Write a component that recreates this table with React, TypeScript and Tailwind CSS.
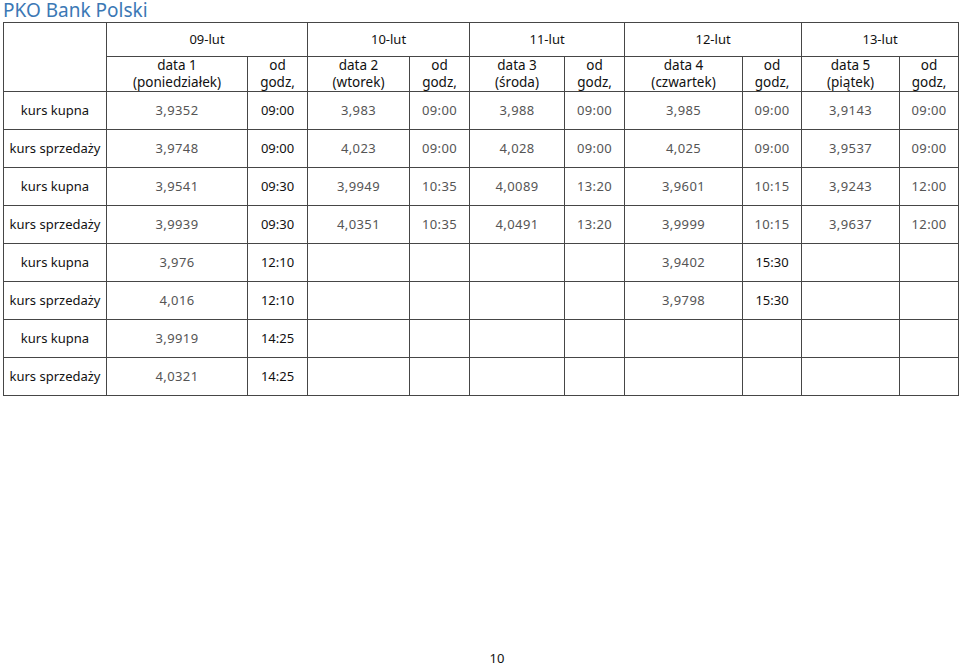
import React from 'react';

const font = { fontFamily: '"Noto Sans", "DejaVu Sans", sans-serif' };

type Cell = { v: string; t: string; dark?: boolean } | null;

interface Row {
  label: string;
  cells: Cell[];
}

const rows: Row[] = [
  {
    label: 'kurs kupna',
    cells: [
      { v: '3,9352', t: '09:00', dark: true },
      { v: '3,983', t: '09:00' },
      { v: '3,988', t: '09:00' },
      { v: '3,985', t: '09:00' },
      { v: '3,9143', t: '09:00' },
    ],
  },
  {
    label: 'kurs sprzedaży',
    cells: [
      { v: '3,9748', t: '09:00', dark: true },
      { v: '4,023', t: '09:00' },
      { v: '4,028', t: '09:00' },
      { v: '4,025', t: '09:00' },
      { v: '3,9537', t: '09:00' },
    ],
  },
  {
    label: 'kurs kupna',
    cells: [
      { v: '3,9541', t: '09:30', dark: true },
      { v: '3,9949', t: '10:35' },
      { v: '4,0089', t: '13:20' },
      { v: '3,9601', t: '10:15' },
      { v: '3,9243', t: '12:00' },
    ],
  },
  {
    label: 'kurs sprzedaży',
    cells: [
      { v: '3,9939', t: '09:30', dark: true },
      { v: '4,0351', t: '10:35' },
      { v: '4,0491', t: '13:20' },
      { v: '3,9999', t: '10:15' },
      { v: '3,9637', t: '12:00' },
    ],
  },
  {
    label: 'kurs kupna',
    cells: [{ v: '3,976', t: '12:10', dark: true }, null, null, { v: '3,9402', t: '15:30', dark: true }, null],
  },
  {
    label: 'kurs sprzedaży',
    cells: [{ v: '4,016', t: '12:10', dark: true }, null, null, { v: '3,9798', t: '15:30', dark: true }, null],
  },
  {
    label: 'kurs kupna',
    cells: [{ v: '3,9919', t: '14:25', dark: true }, null, null, null, null],
  },
  {
    label: 'kurs sprzedaży',
    cells: [{ v: '4,0321', t: '14:25', dark: true }, null, null, null, null],
  },
];

const days = [
  { date: '09-lut', name: 'data 1', day: '(poniedziałek)' },
  { date: '10-lut', name: 'data 2', day: '(wtorek)' },
  { date: '11-lut', name: 'data 3', day: '(środa)' },
  { date: '12-lut', name: 'data 4', day: '(czwartek)' },
  { date: '13-lut', name: 'data 5', day: '(piątek)' },
];

// column widths read off the scan
const widths = [103, 141, 60, 102, 60, 95, 60, 118, 59, 98, 59];

const td = 'border border-[#464646] p-0 text-center align-middle';

export default function App() {
  return (
    <div className="w-[960px] h-[667px] bg-white flex flex-col text-[13px] text-[#111]" style={font}>
      <h1 className="h-[22px] pl-[3px] text-[19px] leading-[21px] text-[#3b78b5]">PKO Bank Polski</h1>

      <table className="ml-[3px] table-fixed border-collapse w-[955px]">
        <colgroup>
          {widths.map((w, i) => (
            <col key={i} style={{ width: w }} />
          ))}
        </colgroup>
        <thead>
          <tr className="h-[34px]">
            <td rowSpan={2} className={td} />
            {days.map((d) => (
              <td key={d.date} colSpan={2} className={td}>
                {d.date}
              </td>
            ))}
          </tr>
          <tr className="h-[35px] text-[13.5px] leading-[17px]">
            {days.map((d) => (
              <React.Fragment key={d.name}>
                <td className={td}>
                  <div>{d.name}</div>
                  <div>{d.day}</div>
                </td>
                <td className={td}>
                  <div>od</div>
                  <div>godz,</div>
                </td>
              </React.Fragment>
            ))}
          </tr>
        </thead>
        <tbody>
          {rows.map((r, i) => (
            <tr key={i} className="h-[38px]">
              <td className={`${td} whitespace-nowrap`}>{r.label}</td>
              {r.cells.map((c, j) => (
                <React.Fragment key={j}>
                  <td className={`${td} text-[#555] tracking-[0.4px]`}>{c?.v}</td>
                  <td className={`${td} ${c?.dark ? 'text-[#111]' : 'text-[#555] tracking-[0.4px]'}`}>{c?.t}</td>
                </React.Fragment>
              ))}
            </tr>
          ))}
        </tbody>
      </table>

      <div className="mt-auto pl-[34px] text-center text-[13px] leading-[18px]">10</div>
    </div>
  );
}
